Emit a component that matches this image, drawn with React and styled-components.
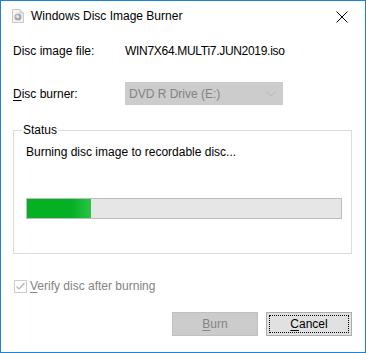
import React from "react";
import styled, { createGlobalStyle } from "styled-components";

const GlobalStyle = createGlobalStyle`
  html, body {
    margin: 0;
    padding: 0;
    background: #ffffff;
  }
  body {
    font-family: "Liberation Sans", Arial, sans-serif;
    font-size: 12px;
    color: #000000;
  }
`;

export default function App() {
  return (
    <>
      <GlobalStyle />
      <Window>
        <TitleBar>
          <DiscIcon />
          <Title>Windows Disc Image Burner</Title>
          <CloseButton aria-label="Close">
            <svg width="12" height="12" viewBox="0 0 12 12">
              <path d="M0.5 0.5 L11.5 11.5 M11.5 0.5 L0.5 11.5" stroke="#000" strokeWidth="1" fill="none" />
            </svg>
          </CloseButton>
        </TitleBar>

        <Body>
          <FieldRow>
            <FieldLabel>Disc image file:</FieldLabel>
            <Value>WIN7X64.MULTi7.JUN2019.iso</Value>
          </FieldRow>

          <BurnerRow>
            <FieldLabel>
              <u>D</u>isc burner:
            </FieldLabel>
            <Combo>
              <span>DVD R Drive (E:)</span>
              <svg width="10" height="6" viewBox="0 0 10 6">
                <path d="M0.5 0.5 L5 5 L9.5 0.5" stroke="#b5b5b5" strokeWidth="1" fill="none" />
              </svg>
            </Combo>
          </BurnerRow>

          <StatusGroup>
            <Legend>Status</Legend>
            <StatusText>Burning disc image to recordable disc...</StatusText>
            <Progress>
              <ProgressFill style={{ width: "20.5%" }} />
            </Progress>
          </StatusGroup>

          <CheckRow>
            <CheckBox>
              <svg width="11" height="11" viewBox="0 0 11 11">
                <path d="M1.5 5.5 L4 8 L9.5 2" stroke="#b3b3b3" strokeWidth="1.2" fill="none" />
              </svg>
            </CheckBox>
            <CheckLabel>
              <u>V</u>erify disc after burning
            </CheckLabel>
          </CheckRow>

          <ButtonRow>
            <Button disabled>
              <u>B</u>urn
            </Button>
            <Button $focused>
              <u>C</u>ancel
            </Button>
          </ButtonRow>
        </Body>
      </Window>
    </>
  );
}

function DiscIcon() {
  return (
    <svg width="12" height="14" viewBox="0 0 12 14">
      <path d="M0.5 0.5 H8 L11.5 4 V13.5 H0.5 Z" fill="#f4f4f4" stroke="#c9c9c9" />
      <path d="M8 0.5 V4 H11.5" fill="#e6e6e6" stroke="#c9c9c9" />
      <circle cx="6" cy="8" r="3.6" fill="#a9a9a9" />
      <circle cx="5.3" cy="7.2" r="1.6" fill="#d8d8d8" />
      <circle cx="6" cy="8" r="0.9" fill="#f4f4f4" />
    </svg>
  );
}

const Window = styled.div`
  width: 366px;
  height: 353px;
  box-sizing: border-box;
  border: 1px solid #1883d7;
  background: #ffffff;
  display: flex;
  flex-direction: column;
`;

const TitleBar = styled.div`
  height: 30px;
  display: flex;
  align-items: center;
  padding-left: 11px;
`;

const Title = styled.span`
  margin-left: 7px;
  font-size: 12px;
  flex-grow: 1;
`;

const CloseButton = styled.div`
  width: 46px;
  height: 29px;
  display: flex;
  align-items: center;
  justify-content: center;
  margin-top: 1px;
`;

const Body = styled.div`
  display: flex;
  flex-direction: column;
  padding: 0 12px 0 12px;
`;

const FieldRow = styled.div`
  display: flex;
  align-items: center;
  height: 20px;
  margin-top: 10px;
`;

const BurnerRow = styled(FieldRow)`
  height: 23px;
  margin-top: 21px;
`;

const FieldLabel = styled.span`
  width: 112px;
  flex-shrink: 0;
  u {
    text-decoration-thickness: 1px;
    text-underline-offset: 2px;
  }
`;

const Value = styled.span`
  letter-spacing: -0.3px;
`;

const Combo = styled.div`
  width: 158px;
  height: 23px;
  box-sizing: border-box;
  background: #cccccc;
  border: 1px solid #cccccc;
  color: #838383;
  display: flex;
  align-items: center;
  justify-content: space-between;
  padding: 0 6px 0 3px;
`;

const StatusGroup = styled.fieldset`
  margin: 18px 1px 0 0;
  padding: 0 10px 0 12px;
  height: 131px;
  box-sizing: border-box;
  border: 1px solid #dcdcdc;
  min-width: 0;
`;

const Legend = styled.legend`
  padding: 0 1px;
  margin-left: -4px;
  font-size: 12px;
  line-height: 14px;
`;

const StatusText = styled.div`
  margin-top: 8px;
  line-height: 14px;
`;

const Progress = styled.div`
  margin-top: 39px;
  width: 316px;
  height: 21px;
  box-sizing: border-box;
  border: 1px solid #bcbcbc;
  background: #e6e6e6;
  display: flex;
`;

const ProgressFill = styled.div`
  height: 100%;
  background: linear-gradient(90deg, #06b025 0%, #06b025 70%, #2bc44a 100%);
`;

const CheckRow = styled.div`
  display: flex;
  align-items: center;
  margin-top: 25px;
  margin-left: 1px;
  height: 14px;
`;

const CheckBox = styled.div`
  width: 13px;
  height: 13px;
  box-sizing: border-box;
  border: 1px solid #cccccc;
  background: #ffffff;
  display: flex;
  align-items: center;
  justify-content: center;
`;

const CheckLabel = styled.span`
  margin-left: 3px;
  color: #838383;
  u {
    text-underline-offset: 2px;
  }
`;

const ButtonRow = styled.div`
  display: flex;
  justify-content: flex-end;
  gap: 8px;
  margin-top: 19px;
  margin-right: 1px;
`;

const Button = styled.button`
  position: relative;
  width: 86px;
  height: 24px;
  box-sizing: border-box;
  font-family: "Liberation Sans", Arial, sans-serif;
  font-size: 12px;
  padding: 0;
  border: 1px solid ${(p) => (p.disabled ? "#bfbfbf" : "#adadad")};
  background: ${(p) => (p.disabled ? "#cccccc" : "#e1e1e1")};
  color: ${(p) => (p.disabled ? "#838383" : "#000000")};
  u {
    text-underline-offset: 2px;
  }
  &::after {
    content: "";
    display: ${(p) => (p.$focused ? "block" : "none")};
    position: absolute;
    inset: 2px;
    border: 1px dotted #000000;
  }
`;
